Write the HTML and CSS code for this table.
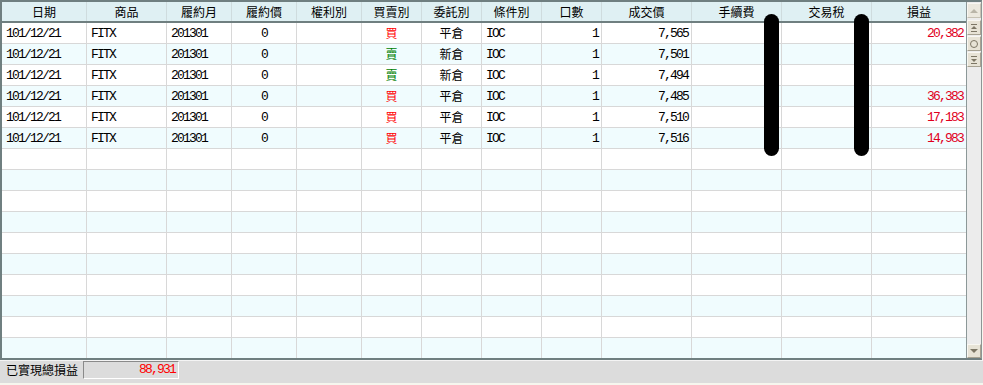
FILE: index.html
```html
<!DOCTYPE html>
<html>
<head>
<meta charset="utf-8">
<link rel="stylesheet" href="styles.css">
</head>
<body>
<div class="frame">
  <div class="main">
    <div class="table">
      <div class="row head">
        <div class="cell">日期</div><div class="cell">商品</div><div class="cell">履約月</div><div class="cell">履約價</div><div class="cell">權利別</div><div class="cell">買賣別</div><div class="cell">委託別</div><div class="cell">條件別</div><div class="cell">口數</div><div class="cell">成交價</div><div class="cell">手續費</div><div class="cell">交易稅</div><div class="cell">損益</div>
      </div>
      <div class="row">
        <div class="cell l m">101/12/21</div><div class="cell l m">FITX</div><div class="cell l m">201301</div><div class="cell c m">0</div><div class="cell"></div><div class="cell c red">買</div><div class="cell c">平倉</div><div class="cell l m">IOC</div><div class="cell r m">1</div><div class="cell r m">7,565</div><div class="cell"></div><div class="cell"></div><div class="cell r m loss">20,382</div>
      </div>
      <div class="row">
        <div class="cell l m">101/12/21</div><div class="cell l m">FITX</div><div class="cell l m">201301</div><div class="cell c m">0</div><div class="cell"></div><div class="cell c green">賣</div><div class="cell c">新倉</div><div class="cell l m">IOC</div><div class="cell r m">1</div><div class="cell r m">7,501</div><div class="cell"></div><div class="cell"></div><div class="cell r m loss"></div>
      </div>
      <div class="row">
        <div class="cell l m">101/12/21</div><div class="cell l m">FITX</div><div class="cell l m">201301</div><div class="cell c m">0</div><div class="cell"></div><div class="cell c green">賣</div><div class="cell c">新倉</div><div class="cell l m">IOC</div><div class="cell r m">1</div><div class="cell r m">7,494</div><div class="cell"></div><div class="cell"></div><div class="cell r m loss"></div>
      </div>
      <div class="row">
        <div class="cell l m">101/12/21</div><div class="cell l m">FITX</div><div class="cell l m">201301</div><div class="cell c m">0</div><div class="cell"></div><div class="cell c red">買</div><div class="cell c">平倉</div><div class="cell l m">IOC</div><div class="cell r m">1</div><div class="cell r m">7,485</div><div class="cell"></div><div class="cell"></div><div class="cell r m loss">36,383</div>
      </div>
      <div class="row">
        <div class="cell l m">101/12/21</div><div class="cell l m">FITX</div><div class="cell l m">201301</div><div class="cell c m">0</div><div class="cell"></div><div class="cell c red">買</div><div class="cell c">平倉</div><div class="cell l m">IOC</div><div class="cell r m">1</div><div class="cell r m">7,510</div><div class="cell"></div><div class="cell"></div><div class="cell r m loss">17,183</div>
      </div>
      <div class="row">
        <div class="cell l m">101/12/21</div><div class="cell l m">FITX</div><div class="cell l m">201301</div><div class="cell c m">0</div><div class="cell"></div><div class="cell c red">買</div><div class="cell c">平倉</div><div class="cell l m">IOC</div><div class="cell r m">1</div><div class="cell r m">7,516</div><div class="cell"></div><div class="cell"></div><div class="cell r m loss">14,983</div>
      </div>
      <div class="row"><div class="cell"></div><div class="cell"></div><div class="cell"></div><div class="cell"></div><div class="cell"></div><div class="cell"></div><div class="cell"></div><div class="cell"></div><div class="cell"></div><div class="cell"></div><div class="cell"></div><div class="cell"></div><div class="cell"></div></div>
      <div class="row"><div class="cell"></div><div class="cell"></div><div class="cell"></div><div class="cell"></div><div class="cell"></div><div class="cell"></div><div class="cell"></div><div class="cell"></div><div class="cell"></div><div class="cell"></div><div class="cell"></div><div class="cell"></div><div class="cell"></div></div>
      <div class="row"><div class="cell"></div><div class="cell"></div><div class="cell"></div><div class="cell"></div><div class="cell"></div><div class="cell"></div><div class="cell"></div><div class="cell"></div><div class="cell"></div><div class="cell"></div><div class="cell"></div><div class="cell"></div><div class="cell"></div></div>
      <div class="row"><div class="cell"></div><div class="cell"></div><div class="cell"></div><div class="cell"></div><div class="cell"></div><div class="cell"></div><div class="cell"></div><div class="cell"></div><div class="cell"></div><div class="cell"></div><div class="cell"></div><div class="cell"></div><div class="cell"></div></div>
      <div class="row"><div class="cell"></div><div class="cell"></div><div class="cell"></div><div class="cell"></div><div class="cell"></div><div class="cell"></div><div class="cell"></div><div class="cell"></div><div class="cell"></div><div class="cell"></div><div class="cell"></div><div class="cell"></div><div class="cell"></div></div>
      <div class="row"><div class="cell"></div><div class="cell"></div><div class="cell"></div><div class="cell"></div><div class="cell"></div><div class="cell"></div><div class="cell"></div><div class="cell"></div><div class="cell"></div><div class="cell"></div><div class="cell"></div><div class="cell"></div><div class="cell"></div></div>
      <div class="row"><div class="cell"></div><div class="cell"></div><div class="cell"></div><div class="cell"></div><div class="cell"></div><div class="cell"></div><div class="cell"></div><div class="cell"></div><div class="cell"></div><div class="cell"></div><div class="cell"></div><div class="cell"></div><div class="cell"></div></div>
      <div class="row"><div class="cell"></div><div class="cell"></div><div class="cell"></div><div class="cell"></div><div class="cell"></div><div class="cell"></div><div class="cell"></div><div class="cell"></div><div class="cell"></div><div class="cell"></div><div class="cell"></div><div class="cell"></div><div class="cell"></div></div>
      <div class="row"><div class="cell"></div><div class="cell"></div><div class="cell"></div><div class="cell"></div><div class="cell"></div><div class="cell"></div><div class="cell"></div><div class="cell"></div><div class="cell"></div><div class="cell"></div><div class="cell"></div><div class="cell"></div><div class="cell"></div></div>
      <div class="row"><div class="cell"></div><div class="cell"></div><div class="cell"></div><div class="cell"></div><div class="cell"></div><div class="cell"></div><div class="cell"></div><div class="cell"></div><div class="cell"></div><div class="cell"></div><div class="cell"></div><div class="cell"></div><div class="cell"></div></div>
    </div>
    <div class="scrollbar">
      <div class="sbtn b1 disabled"><svg width="12" height="12" viewBox="0 0 12 12"><path d="M2 8 L6 4 L10 8 Z" fill="currentColor"/></svg></div>
      <div class="sbtn b2"><svg width="12" height="12" viewBox="0 0 12 12"><path d="M3 2.5 H9" stroke="currentColor" stroke-width="1"/><path d="M3 7 L6 4 L9 7 Z" fill="currentColor"/><path d="M3 9.5 H9" stroke="currentColor" stroke-width="1"/></svg></div>
      <div class="sbtn b3"><svg width="12" height="12" viewBox="0 0 12 12"><circle cx="6" cy="6" r="3.5" fill="none" stroke="currentColor" stroke-width="1"/></svg></div>
      <div class="sbtn b4"><svg width="12" height="12" viewBox="0 0 12 12"><path d="M3 2.5 H9" stroke="currentColor" stroke-width="1"/><path d="M3 5 L6 8 L9 5 Z" fill="currentColor"/><path d="M3 9.5 H9" stroke="currentColor" stroke-width="1"/></svg></div>
      <div class="sbtn bdown"><svg width="12" height="12" viewBox="0 0 12 12"><path d="M2 4 L6 8 L10 4 Z" fill="currentColor"/></svg></div>
    </div>
  </div>
  <div class="mask m1"></div>
  <div class="mask m2"></div>
</div>
<div class="footer">
  <div class="flabel">已實現總損益</div>
  <div class="fvalue">88,931</div>
</div>
</body>
</html>
```

FILE: styles.css
```css
html, body {
  margin: 0;
  padding: 0;
}
body {
  width: 983px;
  height: 385px;
  background: #f6f6ee;
  font-family: "Noto Sans CJK TC", "Liberation Sans", sans-serif;
  font-size: 12px;
  color: #000;
  overflow: hidden;
}
.frame {
  position: relative;
  width: 982px;
  box-sizing: border-box;
  border-top: 2px solid #6f7f80;
  border-left: 2px solid #6f7f80;
  border-bottom: 2px solid #6f7f80;
  border-right: 1px solid #8d9595;
}
.main {
  display: flex;
}
.table {
  width: 965px;
  box-sizing: border-box;
  border-right: 1px solid #8c9898;
  background: #fff;
}
.row {
  display: grid;
  grid-template-columns: 85px 80px 65px 65px 65px 60px 60px 60px 60px 90px 90px 90px 94px;
  height: 21px;
  box-sizing: border-box;
  border-bottom: 1px solid #d8d8d8;
  background: #fff;
}
.row:nth-child(odd) {
  background: #f0fcfe;
}
.row.head {
  background: #dff0f3;
  border-bottom: 2px solid #6f7f80;
}
.row:last-child {
  height: 20px;
  border-bottom: none;
}
.cell {
  box-sizing: border-box;
  border-right: 1px solid #d8d8d8;
  display: flex;
  align-items: center;
  justify-content: center;
  padding: 0 4px;
  white-space: nowrap;
  line-height: 1;
}
.head .cell {
  border-right-color: #cfdcde;
}
.cell:last-child {
  border-right: none;
}
.cell.l { justify-content: flex-start; }
.cell.r { justify-content: flex-end; padding-right: 3px; }
.cell.c { justify-content: center; }
.cell.m {
  font-family: "Liberation Mono", "DejaVu Sans Mono", monospace;
  font-size: 13px;
  letter-spacing: -1.8px;
}
.red { color: #ff0000; }
.green { color: #008000; }
.loss { color: #e0001c; }

.scrollbar {
  width: 14px;
  background: #ececec;
  display: flex;
  flex-direction: column;
}
.sbtn {
  width: 14px;
  height: 15px;
  box-sizing: border-box;
  background: #e7e3d6;
  border-top: 1px solid #f8f7f2;
  border-left: 1px solid #f8f7f2;
  border-right: 1px solid #a7a292;
  border-bottom: 1px solid #a7a292;
  color: #7c7665;
  display: flex;
  align-items: center;
  justify-content: center;
}
.sbtn svg { display: block; }
.sbtn.disabled {
  color: #b9b5a8;
  background: #ebe8de;
  border-right-color: #c6c2b4;
  border-bottom-color: #c6c2b4;
}
.b1 { margin-top: 1px; }
.b2 { margin-top: 2px; }
.b3 { margin-top: 1px; }
.b4 { margin-top: 1px; }
.bdown { margin-top: auto; height: 14px; }

.mask {
  position: absolute;
  top: 12px;
  width: 15px;
  height: 142px;
  background: #000;
  border-radius: 8px;
}
.m1 { left: 762px; }
.m2 { left: 852px; }

.footer {
  width: 983px;
  height: 23px;
  box-sizing: border-box;
  background: #dcdcdc;
  border-top: 1px solid #f4f4f4;
  display: flex;
  align-items: flex-start;
  padding-left: 6px;
}
.flabel {
  white-space: nowrap;
  height: 18px;
  line-height: 18px;
  font-size: 12px;
}
.fvalue {
  margin-left: 5px;
  width: 96px;
  height: 18px;
  box-sizing: border-box;
  border-top: 1px solid #8a8a8a;
  border-left: 1px solid #8a8a8a;
  border-right: 1px solid #ffffff;
  border-bottom: 1px solid #ffffff;
  color: #ff0000;
  text-align: right;
  padding-right: 3px;
  font-family: "Liberation Mono", "DejaVu Sans Mono", monospace;
  font-size: 13px;
  letter-spacing: -1.8px;
  line-height: 16px;
}
```
